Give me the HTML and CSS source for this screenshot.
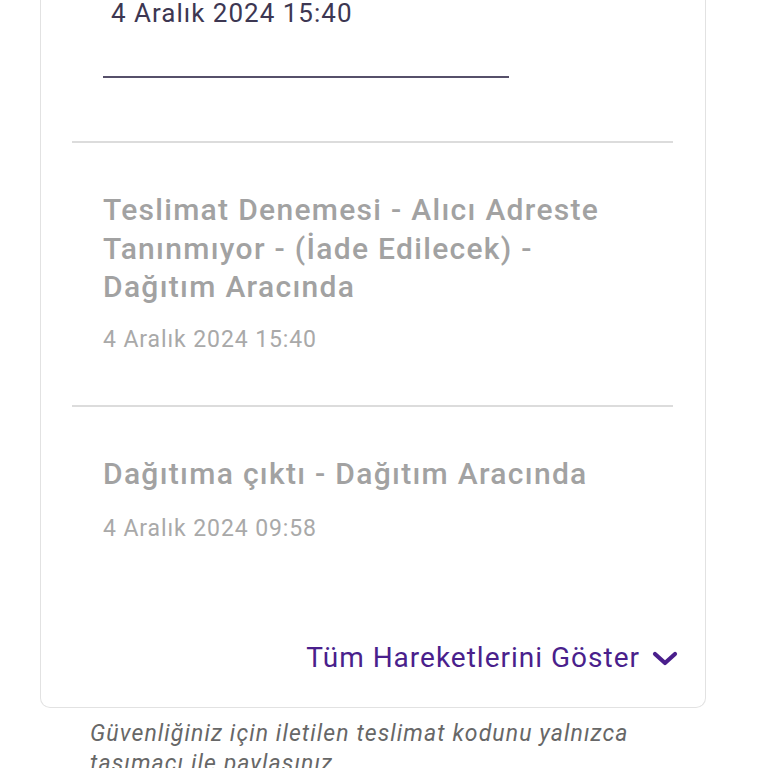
FILE: index.html
```html
<!DOCTYPE html>
<html lang="tr">
<head>
<meta charset="utf-8">
<link rel="stylesheet" href="styles.css">
</head>
<body>
<div class="card">
  <div class="entry-top">
    <div class="top-date">4 Aralık 2024 15:40</div>
    <div class="top-rule"></div>
  </div>
  <div class="divider"></div>
  <div class="entry first">
    <div class="title">Teslimat Denemesi - Alıcı Adreste Tanınmıyor - (İade Edilecek) - Dağıtım Aracında</div>
    <div class="date">4 Aralık 2024 15:40</div>
  </div>
  <div class="divider"></div>
  <div class="entry second">
    <div class="title">Dağıtıma çıktı - Dağıtım Aracında</div>
    <div class="date">4 Aralık 2024 09:58</div>
  </div>
  <div class="more">
    <span class="more-text">Tüm Hareketlerini Göster</span>
    <svg class="chevron" width="26" height="18" viewBox="0 0 26 18"><path d="M3 4 L13 13 L23 4" fill="none" stroke="currentColor" stroke-width="4.2" stroke-linecap="round" stroke-linejoin="round"/></svg>
  </div>
</div>
<p class="note">Güvenliğiniz için iletilen teslimat kodunu yalnızca taşımacı ile paylaşınız.</p>
</body>
</html>
```
FILE: styles.css
```css
html, body {
  margin: 0;
  padding: 0;
  background: #ffffff;
  font-family: Roboto, "Noto Sans", sans-serif;
}
body {
  overflow: hidden;
  height: 768px;
}
.card {
  margin: -2px 62px 0 40px;
  border: 1.5px solid #e2e2e2;
  border-top: none;
  border-radius: 0 0 10px 10px;
  background: #fff;
}
.entry-top {
  padding-left: 62px;
}
.top-date {
  font-size: 26px;
  line-height: 30px;
  letter-spacing: 1px;
  color: #3d3752;
  padding-left: 8px;
}
.top-rule {
  margin-top: 48px;
  width: 406px;
  height: 2px;
  background: #56506a;
}
.divider {
  margin: 63px 32px 0 31px;
  height: 2px;
  background: #dcdcdc;
}
.entry {
  padding-left: 62px;
  padding-right: 32px;
}
.entry.first {
  padding-top: 48px;
}
.entry.first + .divider {
  margin-top: 51px;
}
.entry.second {
  padding-top: 48px;
}
.title {
  font-size: 30px;
  line-height: 38.5px;
  letter-spacing: 1.3px;
  font-weight: 500;
  color: #a2a2a2;
}
.first .title {
  width: 530px;
}
.date {
  font-size: 23px;
  line-height: 28px;
  letter-spacing: 0.9px;
  color: #a9a9a9;
}
.first .date {
  margin-top: 19px;
}
.second .date {
  margin-top: 22px;
}
.more {
  margin-top: 98px;
  padding: 0 27px 32px 0;
  display: flex;
  justify-content: flex-end;
  align-items: center;
  gap: 12px;
  color: #4a1f8c;
}
.more-text {
  font-size: 28px;
  line-height: 34px;
  letter-spacing: 1px;
}
.chevron {
  display: block;
  margin-top: 2px;
}
.note {
  margin: 11px 0 0 90px;
  width: 620px;
  font-size: 23px;
  line-height: 30px;
  letter-spacing: 1.1px;
  font-style: italic;
  color: #676767;
}
```
